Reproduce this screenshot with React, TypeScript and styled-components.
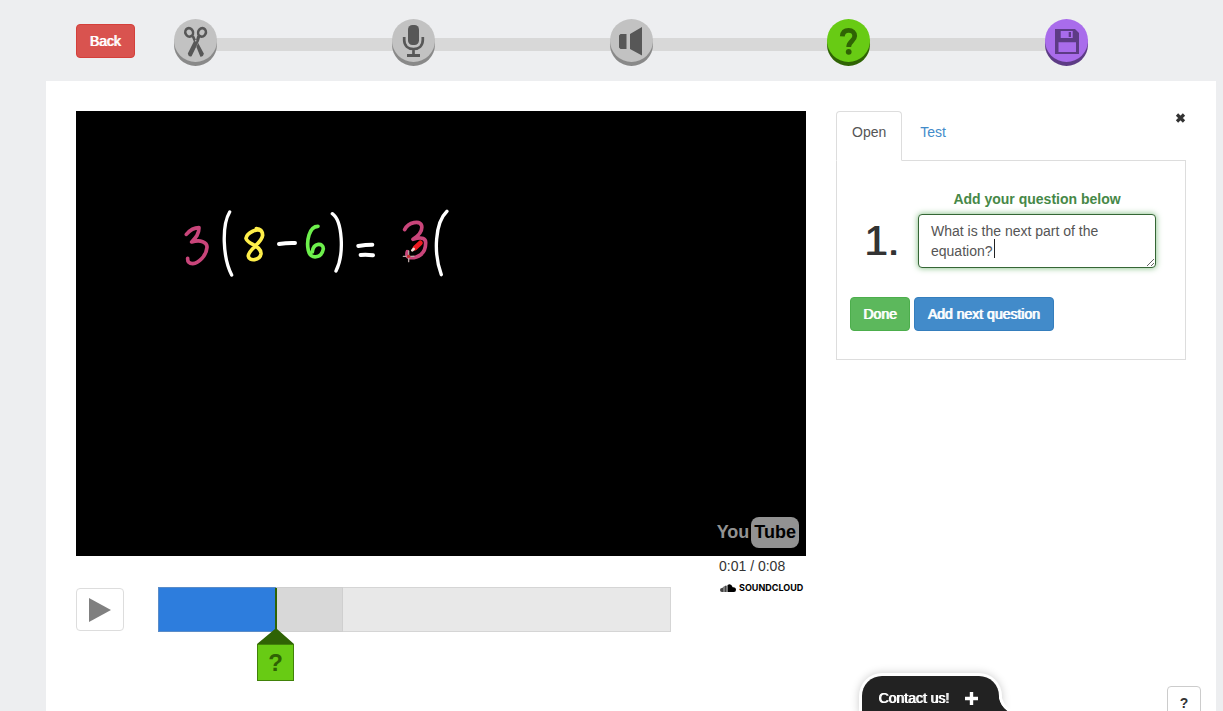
import React from "react";
import styled, { createGlobalStyle } from "styled-components";

const sans = '"Liberation Sans", Arial, sans-serif';

const GlobalStyle = createGlobalStyle`
  * { box-sizing: border-box; }
  body {
    margin: 0;
    background: #edeef0;
    color: #333;
    font: 14px/20px ${sans};
  }
`;

type Tone = "danger" | "success" | "primary";
const tones: Record<Tone, { fill: string; edge: string }> = {
  danger: { fill: "#d9534f", edge: "#d43f3a" },
  success: { fill: "#5cb85c", edge: "#4cae4c" },
  primary: { fill: "#428bca", edge: "#357ebd" },
};

const Button = styled.button<{ $tone: Tone }>`
  height: 34px;
  padding: 0 13px 0 12px;
  min-width: 59px;
  border: 1px solid ${(p) => tones[p.$tone].edge};
  border-radius: 4px;
  background: ${(p) => tones[p.$tone].fill};
  color: #fff;
  font: 14px/20px ${sans};
  text-shadow: 1px 0 0 #fff;
  white-space: nowrap;
  cursor: pointer;
`;

const Header = styled.header`
  display: flex;
  align-items: center;
  gap: 39px;
  height: 81px;
  padding: 0 135px 0 76px;
`;

const Steps = styled.nav`
  flex: 1;
  display: flex;
  align-items: center;
`;

const Connector = styled.span`
  flex: 1;
  height: 13px;
  margin: 8px -2px 0;
  background: #d8d8d8;
`;

const Step = styled.button<{ $fill: string; $ink: string; $base: string }>`
  position: relative;
  flex: none;
  width: 43px;
  height: 43px;
  padding: 0;
  border: 0;
  border-radius: 50%;
  background: ${(p) => p.$fill};
  color: ${(p) => p.$ink};
  box-shadow: 0 4px 0 ${(p) => p.$base};
  cursor: pointer;

  svg { display: block; }
`;

const Panel = styled.main`
  display: grid;
  grid-template-columns: minmax(0, 73fr) minmax(0, 35fr);
  align-items: start;
  gap: 30px;
  min-height: calc(100vh - 81px);
  margin: 0 7px 0 46px;
  padding: 30px;
  background: #fff;
`;

const Video = styled.div`
  position: relative;
  aspect-ratio: 730 / 445;
  background: #000;
`;

const Frame = styled.svg`
  display: block;
  width: 100%;
  height: 100%;
`;

const YouTube = styled.a`
  position: absolute;
  right: 7px;
  bottom: 8px;
  display: flex;
  align-items: center;
  gap: 2px;
  color: #929292;
  font: bold 18px/31px ${sans};
  text-decoration: none;
`;

const Tube = styled.span`
  padding: 0 3px;
  border-radius: 8px;
  background: #929292;
  color: #000;
`;

const Controls = styled.div`
  display: flex;
  align-items: flex-start;
`;

const Play = styled.button`
  display: grid;
  place-items: center;
  width: 48px;
  height: 43px;
  margin: 32px 34px 0 0;
  padding: 0;
  border: 1px solid #ddd;
  border-radius: 4px;
  background: #fff;
  cursor: pointer;
`;

const Track = styled.div`
  position: relative;
  flex: 1;
  height: 45px;
  margin-top: 31px;
  border: 1px solid #d5d5d5;
  background: #e8e8e8;
`;

const Range = styled.div<{ $fill: string; $edge: string }>`
  position: absolute;
  top: -1px;
  bottom: -1px;
  left: -1px;
  border: 1px solid ${(p) => p.$edge};
  background: ${(p) => p.$fill};
`;

const Marker = styled.button`
  position: absolute;
  top: 0;
  width: 37px;
  margin-left: -19px;
  padding: 0;
  border: 0;
  background: none;
  cursor: pointer;

  svg { display: block; }
`;

const MarkerLabel = styled.span`
  display: block;
  height: 37px;
  border: 1px solid #418209;
  background: #68cb14;
  color: #2f6304;
  font: bold 24px/36px ${sans};
`;

const Meta = styled.div`
  width: 87px;
  margin-left: 48px;
`;

const Sound = styled.a`
  display: flex;
  align-items: center;
  gap: 2px;
  height: 12px;
  margin-top: 6px;
  color: #000;
  font: bold 9px/12px Inter, sans-serif;
  text-decoration: none;
`;

const Tabs = styled.div`
  display: flex;
  align-items: flex-start;
  gap: 2px;
`;

const Tab = styled.button<{ $active?: boolean }>`
  height: 50px;
  margin-bottom: -1px;
  padding: 0 15px 8px;
  border: 1px solid ${(p) => (p.$active ? "#ddd" : "transparent")};
  border-bottom-color: ${(p) => (p.$active ? "#fff" : "transparent")};
  border-radius: 4px 4px 0 0;
  background: ${(p) => (p.$active ? "#fff" : "transparent")};
  color: ${(p) => (p.$active ? "#555" : "#428bca")};
  font: 14px/20px ${sans};
  position: relative;
  cursor: pointer;
`;

const Close = styled.button`
  margin: 2px 0 0 auto;
  padding: 0;
  border: 0;
  background: none;
  cursor: pointer;

  svg { display: block; }
`;

const Question = styled.form`
  padding: 28px 29px 28px 13px;
  border: 1px solid #ddd;
`;

const Fields = styled.div`
  display: grid;
  grid-template-columns: 68px 1fr;
  row-gap: 5px;
`;

const Label = styled.label`
  grid-column: 2;
  color: #468847;
  font-weight: bold;
  text-align: center;
`;

const Numeral = styled.span`
  padding-left: 14px;
  font-size: 42px;
  line-height: 54px;
  text-shadow: 1px 0 0 #333;
`;

const Answer = styled.div`
  position: relative;
`;

const TextBox = styled.textarea`
  display: block;
  width: 100%;
  height: 54px;
  padding: 6px 12px;
  border: 1px solid #356635;
  border-radius: 4px;
  outline: 0;
  background: #fff;
  box-shadow: 0 0 6px #7aba7b;
  color: #555;
  font: 14px/20px ${sans};
  overflow: hidden;
`;

const Caret = styled.span`
  position: absolute;
  left: 76px;
  top: 25px;
  width: 1px;
  height: 19px;
  background: #222;
`;

const Actions = styled.div`
  display: flex;
  gap: 4px;
  margin-top: 29px;
`;

const Contact = styled.button`
  position: fixed;
  right: 224px;
  bottom: 0;
  display: flex;
  align-items: center;
  gap: 16px;
  height: 35px;
  padding: 9px 21px 0 16px;
  border: 0;
  border-radius: 20px 20px 0 0;
  background: #222;
  box-shadow: 0 0 0 3px #fff, 0 0 8px 3px #ccc;
  color: #fff;
  font: 14px/20px ${sans};
  text-shadow: 1px 0 0 #fff;
  cursor: pointer;
`;

const Flare = styled.svg`
  position: absolute;
  left: 100%;
  bottom: 0;
`;

const Help = styled.button`
  position: fixed;
  right: 22px;
  bottom: -9px;
  width: 34px;
  height: 34px;
  padding: 0;
  border: 1px solid #ccc;
  border-radius: 4px;
  background: #fff;
  color: #333;
  font: bold 14px/20px ${sans};
  cursor: pointer;
`;

const grey = { $fill: "#c2c2c2", $ink: "#575757", $base: "#898989" };
const green = { $fill: "#68cb14", $ink: "#2f6304", $base: "#2f6304" };
const purple = { $fill: "#a96ceb", $ink: "#5d3b85", $base: "#5d3b85" };

const steps = [
  {
    name: "Crop",
    tone: grey,
    icon: (
      <>
        <g fill="none" stroke="currentColor" strokeWidth="2.6">
          <ellipse cx="15.2" cy="13.4" rx="3.8" ry="4.3" transform="rotate(-25 15.2 13.4)" />
          <ellipse cx="28" cy="13.4" rx="3.8" ry="4.3" transform="rotate(25 28 13.4)" />
        </g>
        <path d="M17.5 17.2 20 16.6 22 21 23.3 16.6 26.4 17.2 25 22 17.6 37.3Q14.5 38.4 13.8 34.6L19.8 22.5Z" fill="currentColor" />
        <path d="M24.2 24 29.8 34.5Q29.2 38 26.4 37.8L22.4 28Z" fill="currentColor" />
        <circle cx="21.7" cy="21.7" r=".8" fill="#c2c2c2" />
      </>
    ),
  },
  {
    name: "Audio track",
    tone: grey,
    icon: (
      <>
        <rect x="16" y="6" width="11" height="20" rx="4.5" fill="currentColor" />
        <path d="M12.2 18v3c0 5.8 4 9 9.3 9s9.3-3.2 9.3-9v-3M21.5 30v6" fill="none" stroke="currentColor" strokeWidth="2.7" />
        <path d="M15 35h13v3H15z" fill="currentColor" />
      </>
    ),
  },
  {
    name: "Audio notes",
    tone: grey,
    icon: <path d="M10.5 15H16.5V30H10.5L9 28.5V16.5ZM20 15 32 8V36.5L20 30Z" fill="currentColor" />,
  },
  {
    name: "Questions",
    tone: green,
    icon: (
      <>
        <path d="M15.3 17.4C15.6 13.4 17.8 11.4 21.6 11.4S27.7 13.6 27.7 17C27.7 21.8 21.7 22.2 21.7 28" fill="none" stroke="currentColor" strokeWidth="4.8" />
        <circle cx="21.7" cy="32.8" r="2.9" fill="currentColor" />
      </>
    ),
  },
  {
    name: "Save",
    tone: purple,
    icon: (
      <path
        fillRule="evenodd"
        d="M10 10H30L34 14V35H10ZM15.7 12V19H27.7V12ZM13.5 23.3V33H31V23.3ZM23.7 13H26V18H23.7Z"
        fill="currentColor"
      />
    ),
  },
];

export default function App() {
  return (
    <>
      <GlobalStyle />
      <Header>
        <Button type="button" $tone="danger">Back</Button>
        <Steps aria-label="Editing steps">
          {steps.map((step, i) => (
            <React.Fragment key={step.name}>
              {i > 0 && <Connector />}
              <Step type="button" aria-label={step.name} {...step.tone}>
                <svg width="43" height="43" viewBox="0 0 43 43" aria-hidden="true">{step.icon}</svg>
              </Step>
            </React.Fragment>
          ))}
        </Steps>
      </Header>

      <Panel>
        <section>
          <Video>
            <Frame viewBox="0 0 730 445" role="img" aria-label="Handwritten equation">
              <g transform="translate(94 84) scale(.3333)" fill="none" strokeLinecap="round" strokeLinejoin="round" strokeWidth="10">
                <path stroke="#c9457a" strokeWidth="11" d="M49 118Q66 98 87 98C87 117 78 127 65 141C91 133 112 141 111 157C109 183 86 204 68 206Q52 206 53 190" />
                <path stroke="#fff" d="M179 51C155 91 158 187 185 240" />
                <path stroke="#ffef4a" strokeWidth="11" d="M275 109C263 98 231 112 228 130C232 148 274 151 273 176C270 197 237 200 235 184C233 163 275 147 278 121Q277 102 259 101" />
                <path stroke="#fff" strokeWidth="12" d="M327 147Q352 143 375 144" />
                <path stroke="#6df04c" strokeWidth="11" d="M444 94C417 94 409 139 415 166C421 195 455 190 460 162C461 142 430 142 427 171" />
                <path stroke="#fff" d="M487 56C517 77 524 176 498 228" />
                <path stroke="#fff" strokeWidth="12" d="M565 153Q587 149 607 149M572 180Q589 178 609 181" />
                <path stroke="#c9457a" strokeWidth="11" d="M704 104C716 80 750 76 755 92C759 111 738 127 729 133C759 124 768 131 767 145C767 177 744 190 718 188Q708 184 712 170" />
                <path stroke="#fff" d="M831 49C795 83 790 174 814 239" />
                <path stroke="#ef1b22" strokeWidth="15" d="M735 159 751 144" />
                <path stroke="#f3d8d2" strokeWidth="8" d="M727 166 731 162" />
                <path stroke="#b8a4a4" strokeWidth="4" d="M700 184H732M716 168V200" />
                <circle cx="716" cy="184" r="5" fill="#c22b2b" stroke="none" />
              </g>
            </Frame>
            <YouTube href="#youtube">You<Tube>Tube</Tube></YouTube>
          </Video>
          <Controls>
            <Play type="button" aria-label="Play">
              <svg width="24" height="24" viewBox="0 0 24 24" aria-hidden="true">
                <path d="M1 0 23 12 1 24Z" fill="#808080" />
              </svg>
            </Play>
            <Track>
              <Range $fill="#d8d8d8" $edge="#cfcfcf" style={{ width: "36.2%" }} />
              <Range $fill="#2d7ddd" $edge="#5a8cc8" style={{ width: "23.1%" }} />
              <Marker type="button" aria-label="Question 1" style={{ left: "22.9%" }}>
                <svg width="37" height="56" viewBox="0 0 37 56" aria-hidden="true">
                  <path d="M18 0H20V41L37 56H0L18 41Z" fill="#2f6304" />
                </svg>
                <MarkerLabel>?</MarkerLabel>
              </Marker>
            </Track>
            <Meta>
              <div>0:01 / 0:08</div>
              <Sound href="#soundcloud">
                <svg width="18" height="9" viewBox="0 0 18 9" aria-hidden="true">
                  <path d="M3 4Q1 4 1 6T3 8H4V3.5ZM4.3 3V8H5.5V2ZM5.8 2V8H7V1.5ZM7.3 2V8H8.3V1.2Z" fill="#444" />
                  <path d="M8.6 1Q12-1 13.7 3.3Q17 3 17 5.8Q17 8 15 8H8.6Z" fill="#000" />
                </svg>
                SOUNDCLOUD
              </Sound>
            </Meta>
          </Controls>
        </section>

        <aside>
          <Tabs>
            <Tab type="button" $active>Open</Tab>
            <Tab type="button">Test</Tab>
            <Close type="button" aria-label="Close">
              <svg width="11" height="10" viewBox="0 0 11 10" aria-hidden="true">
                <path d="M2 1.5 9 8.5M9 1.5 2 8.5" stroke="#333" strokeWidth="3.2" />
              </svg>
            </Close>
          </Tabs>
          <Question onSubmit={(e) => e.preventDefault()}>
            <Fields>
              <Label htmlFor="question">Add your question below</Label>
              <Numeral>1.</Numeral>
              <Answer>
                <TextBox id="question" defaultValue="What is the next part of the equation?" />
                <Caret />
              </Answer>
            </Fields>
            <Actions>
              <Button type="submit" $tone="success">Done</Button>
              <Button type="button" $tone="primary">Add next question</Button>
            </Actions>
          </Question>
        </aside>
      </Panel>

      <Contact type="button">
        Contact us!
        <svg width="13" height="13" viewBox="0 0 13 13" aria-hidden="true">
          <path d="M6.5 0V13M0 6.5H13" stroke="#fff" strokeWidth="3.4" />
        </svg>
        <Flare width="12" height="16" viewBox="0 0 12 16" aria-hidden="true">
          <path d="M0 0Q1 11 9 16H0Z" fill="#222" />
          <path d="M1 0Q2 10 11 16" fill="none" stroke="#fff" strokeWidth="3" />
        </Flare>
      </Contact>
      <Help type="button" aria-label="Help">?</Help>
    </>
  );
}
